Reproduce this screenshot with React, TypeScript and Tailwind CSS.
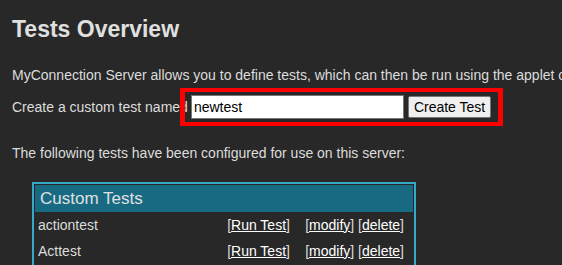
import React from "react"

const tests = ["actiontest", "Acttest"]

export default function App() {
  return (
    <div className="min-h-screen overflow-hidden bg-[#282828] text-[#dcdcdc] font-['Liberation_Sans',Arial,sans-serif] px-3 pt-[15px] text-[14px]">
      <h1 className="text-[23px] font-bold leading-[28px] text-[#e0e0e0]">Tests Overview</h1>

      <p className="mt-[24px] whitespace-nowrap leading-[16px]">
        MyConnection Server allows you to define tests, which can then be run using the applet or the API.
      </p>

      <div className="mt-[5px] flex items-center whitespace-nowrap">
        <span>Create a custom test named</span>
        {/* highlight box round the form */}
        <div className="-ml-[8px] flex items-center border-x-[5px] border-y-[4px] border-[#ff0000] pl-[6px] pr-[7px] py-[3px]">
          <input
            className="h-[24px] w-[213px] border border-[#767676] bg-white px-[2px] text-[14px] text-black outline-none"
            defaultValue="newtest"
          />
          <button className="ml-[4px] h-[22px] rounded-[2px] border border-[#767676] bg-[#efefef] px-[5px] text-[14px] leading-[16px] text-black">
            Create Test
          </button>
        </div>
      </div>

      <p className="mt-[19px] leading-[16px]">The following tests have been configured for use on this server:</p>

      <div className="mt-[21px] ml-[20px] w-[384px] border-2 border-b-0 border-[#38a8c8] p-[1px] pb-[14px]">
        <div className="flex h-[27px] items-center bg-[#186a82] px-[5px] text-[17px] text-[#e0e0e0]">Custom Tests</div>
        {tests.map((name) => (
          <div key={name} className="flex h-[26px] items-center pl-[3px] pr-[9px]">
            <span className="flex-1">{name}</span>
            <span className="w-[78px]">
              [<a className="underline text-white">Run Test</a>]
            </span>
            <span>
              [<a className="underline text-white">modify</a>] [<a className="underline text-white">delete</a>]
            </span>
          </div>
        ))}
      </div>
    </div>
  )
}
